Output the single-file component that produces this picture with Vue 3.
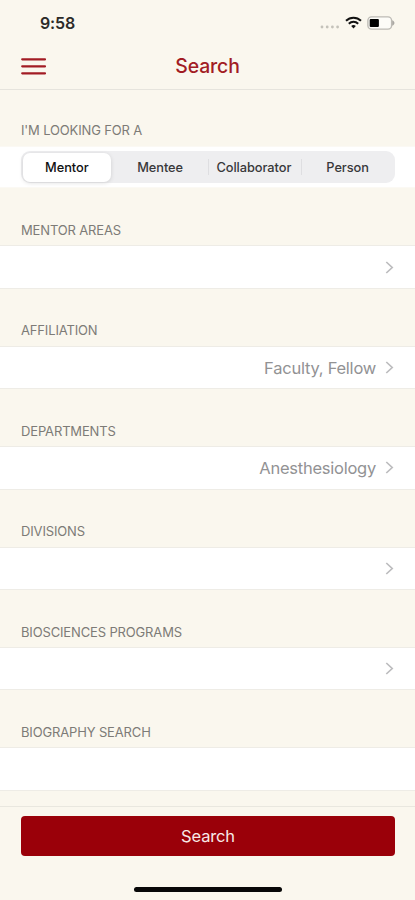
<script setup>
import { ref } from 'vue'

const roles = ['Mentor', 'Mentee', 'Collaborator', 'Person']
const selected = ref('Mentor')
const fields = [
  { label: 'Mentor Areas', value: '', picker: true },
  { label: 'Affiliation', value: 'Faculty, Fellow', picker: true },
  { label: 'Departments', value: 'Anesthesiology', picker: true },
  { label: 'Divisions', value: '', picker: true },
  { label: 'Biosciences Programs', value: '', picker: true },
  { label: 'Biography Search', value: '', picker: false },
]
</script>

<template>
  <div class="screen">
    <div class="status">
      <span class="time">9:58</span>
      <div class="indicators">
        <svg class="dots" width="20" height="4" viewBox="0 0 20 4" fill="#c4c2ba">
          <circle cx="2" cy="2" r="1.4" /><circle cx="7.2" cy="2" r="1.4" />
          <circle cx="12.4" cy="2" r="1.4" /><circle cx="17.6" cy="2" r="1.4" />
        </svg>
        <svg class="wifi" width="17" height="13" viewBox="0 0 17 13" fill="none" stroke="#111" stroke-width="2">
          <path d="M1 4.8C5.2.6 11.8.6 16 4.8" />
          <path d="M3.8 7.7c2.7-2.6 6.7-2.6 9.4 0" />
          <path d="M8.5 12.4 6.2 10c1.3-1.2 3.3-1.2 4.6 0z" fill="#111" stroke="none" />
        </svg>
        <svg class="battery" width="28" height="14" viewBox="0 0 28 14">
          <rect x=".9" y=".9" width="23.7" height="12.2" rx="3.6" fill="#fdfcf8" stroke="#bdbbb5" stroke-width="1.4" />
          <rect x="2.7" y="3" width="9.2" height="8" rx="1" fill="#000" />
          <path d="M25.2 4.2v5.6c3-1.4 3-4.2 0-5.6z" fill="#aaa8a3" />
        </svg>
      </div>
    </div>

    <header class="nav">
      <button class="menu" aria-label="Menu">
        <svg width="26" height="18" viewBox="0 0 26 18" stroke="#a21c24" stroke-width="2.2" stroke-linecap="round">
          <path d="M2.2 2.3h22.8M2.2 9.3h22.8M2.2 16.3h22.8" />
        </svg>
      </button>
      <h1>Search</h1>
    </header>

    <main class="form">
      <section class="group">
        <h2>I'm looking for a</h2>
        <div class="row role-row">
          <div class="segments">
            <button
              v-for="role in roles"
              :key="role"
              class="segment"
              :class="{ active: role === selected }"
              @click="selected = role"
            >{{ role }}</button>
          </div>
        </div>
      </section>

      <section v-for="field in fields" :key="field.label" class="group">
        <h2>{{ field.label }}</h2>
        <div class="row">
          <span class="value">{{ field.value }}</span>
          <svg v-if="field.picker" width="9" height="13" viewBox="0 0 9 13" fill="none" stroke="#bcbcbe" stroke-width="1.7">
            <path d="M1.3 1 7.2 6.5 1.3 12" />
          </svg>
        </div>
      </section>
    </main>

    <footer class="footer">
      <button class="submit">Search</button>
      <div class="home"></div>
    </footer>
  </div>
</template>

<style>
body {
  background: #faf7ee;
}
</style>

<style scoped>
.screen {
  display: flex;
  flex-direction: column;
  height: 900px;
  overflow: hidden;
  background: #faf7ee;
  font-family: Inter, "Liberation Sans", sans-serif;
}
button {
  border: 0;
  padding: 0;
  background: none;
  font-family: inherit;
}
.status {
  display: flex;
  flex: none;
  align-items: center;
  justify-content: space-between;
  height: 46px;
  padding: 0 20px 0 40px;
}
.time {
  font-size: 16px;
  font-weight: 600;
  line-height: 20px;
  letter-spacing: -0.15px;
  color: #2c2b29;
}
.indicators {
  display: flex;
  align-items: center;
}
.dots {
  margin: 8px 5px 0 0;
}
.wifi {
  margin: 0 5px 1px 0;
}
.nav {
  display: grid;
  flex: none;
  grid-template-columns: 60px 1fr 60px;
  align-items: center;
  height: 44px;
  box-sizing: border-box;
  padding: 0 20px;
  border-bottom: 1px solid #e6e4dd;
}
.menu {
  display: flex;
  padding-bottom: 3px;
}
h1 {
  margin: 0;
  padding-bottom: 4px;
  text-align: center;
  font-size: 19.4px;
  font-weight: 500;
  line-height: 24px;
  letter-spacing: -0.1px;
  color: #a21c24;
}
.form {
  flex: 1;
  min-height: 0;
  overflow: hidden;
}
.group {
  display: flex;
  flex-direction: column;
  height: 100.4px;
}
h2 {
  flex: none;
  height: 55px;
  box-sizing: border-box;
  margin: 0;
  padding: 30.6px 21px 0;
  font-size: 13px;
  font-weight: 400;
  line-height: 18px;
  letter-spacing: -0.15px;
  text-transform: uppercase;
  white-space: nowrap;
  color: #7d7b77;
}
.row {
  display: flex;
  align-items: center;
  justify-content: flex-end;
  height: 43.5px;
  box-sizing: border-box;
  padding: 0 21px;
  border-top: 1px solid #eeece6;
  border-bottom: 1px solid #eeece6;
  background: #fff;
}
.role-row {
  height: 42px;
  margin-top: 1px;
  padding-right: 20px;
  border-color: #fbf9f4;
}
.value {
  margin-right: 9px;
  font-size: 16.5px;
  line-height: 22px;
  letter-spacing: -0.24px;
  color: #929294;
}
.segments {
  display: grid;
  flex: 1;
  grid-template-columns: repeat(4, 1fr);
  height: 32px;
  box-sizing: border-box;
  padding: 1.5px;
  border-radius: 9px;
  background: #eeeef0;
}
.segment {
  margin: 0;
  border-radius: 7px;
  font-size: 12.8px;
  font-weight: 500;
  letter-spacing: -0.05px;
  color: #38383a;
}
.segment.active {
  margin-right: 4px;
  background: #fff;
  box-shadow: 0 1px 4px rgba(0, 0, 0, 0.13);
  color: #101012;
}
.segment:nth-child(n + 3) {
  padding-right: 1px;
  border-radius: 0;
  background: linear-gradient(#dedee1, #dedee1) left center / 1px 16px no-repeat;
}
.segment:nth-child(2) {
  padding-right: 3px;
}
.segment:last-child {
  padding: 0 0 0 1px;
}
.footer {
  display: flex;
  flex: none;
  flex-direction: column;
  align-items: center;
  height: 94px;
  box-sizing: border-box;
  padding: 9px 20px 0 21px;
  border-top: 1px solid #e9e7df;
}
.submit {
  width: 100%;
  height: 40px;
  border-radius: 4px;
  background: #9a0009;
  font-size: 16.5px;
  letter-spacing: -0.15px;
  color: #f8e9e7;
}
.home {
  width: 148px;
  height: 5px;
  margin-top: 31px;
  border-radius: 3px;
  background: #080808;
}
</style>
